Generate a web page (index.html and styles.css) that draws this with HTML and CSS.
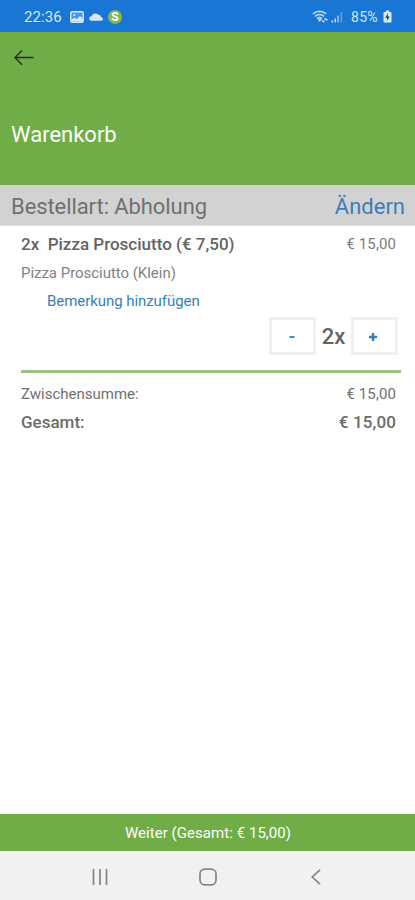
FILE: index.html
```html
<!DOCTYPE html>
<html lang="de">
<head>
<meta charset="utf-8">
<meta name="viewport" content="width=device-width, initial-scale=1">
<title>Warenkorb</title>
<link rel="stylesheet" href="styles.css">
</head>
<body>
<div class="screen">
  <div class="status">
    <span class="clock">22:36</span>
    <svg class="i-photo" width="14" height="12" viewBox="0 0 14 12"><rect x=".8" y=".8" width="12.4" height="10.4" rx="1.5" fill="#4c93e2" stroke="#d5e9fb" stroke-width="1.5"/><circle cx="4.3" cy="4" r="1.1" fill="#d5e9fb"/><path d="M1.500 10.500V8.600l3-2 2.300 1.600L10 5l3 3v2.500z" fill="#d5e9fb"/></svg>
    <svg class="i-cloud" width="14" height="9" viewBox="0 0 14 9"><path d="M2.500 8.800a2.300 2.300 0 0 1 0-4.600A4 4 0 0 1 9.300 2.800a3 3 0 0 1 2.900 2.400A1.800 1.800 0 0 1 12.200 8.800z" fill="#d5e9fb"/></svg>
    <span class="s-badge">S</span>
    <span class="fill"></span>
    <svg class="i-wifi" width="17" height="13" viewBox="0 0 17 13" fill="none" stroke="#b9daf8" stroke-width="1.700"><path d="M.8 4C4.400.600 10.600.600 14.200 4M3 6.300c2.600-2.300 6.400-2.300 9 0M5.200 8.600c1.300-1.200 3.300-1.200 4.600 0"/><path d="M7.800 12 5.300 8.800h4.600z" fill="#b9daf8" stroke="none"/><path d="m10 10.500 2.500 1.500M12.500 8.500l3 1.700"/></svg>
    <svg class="i-signal" width="12" height="12" viewBox="0 0 12 12"><path d="M.5 9.500H2v2H.5zM3.500 7.500H5v4H3.500z" fill="#c5dff8"/><path d="M6.200 4.500H8v7H6.200z" fill="#83b6ec"/><path d="M9.500 1h1.700v10.500H9.500z" fill="#5c9de4"/></svg>
    <span class="battery">85%</span>
    <svg class="i-batt" width="9" height="13" viewBox="0 0 9 13"><path d="M2.700.5h3.600v1.500H7.500q1 0 1 1v8.500q0 1-1 1h-6q-1 0-1-1V3q0-1 1-1h1.200z" fill="#d8ebfb"/><path d="M5 3 2.200 7.700h2L3.800 11l3-4.600H4.700z" fill="#173c66"/></svg>
  </div>
  <header class="header">
    <svg class="back" width="20" height="16" viewBox="0 0 20 16" fill="none" stroke="#202e17" stroke-width="1.300"><path d="M19.500 7.500H1M8 .5.900 7.500 8 14.800"/></svg>
    <h1 class="title">Warenkorb</h1>
  </header>
  <div class="order-type"><span class="type-label">Bestellart: Abholung</span><a class="change">Ändern</a></div>
  <main class="cart">
    <div class="row item"><span class="name">2x&nbsp; Pizza Prosciutto (€ 7,50)</span><span class="price item-price">€ 15,00</span></div>
    <div class="row variant"><span class="variant-text">Pizza Prosciutto (Klein)</span></div>
    <div class="row note"><a class="note-text">Bemerkung hinzufügen</a></div>
    <div class="qty">
      <button class="step"><svg class="minus" width="6" height="2"><path d="M.5 1h5" stroke="#367fbf" stroke-width="1.800"/></svg></button>
      <span class="count">2x</span>
      <button class="step"><svg class="plus" width="8" height="8"><path d="M0 4h8M4 0v8" stroke="#367fbf" stroke-width="2.400"/></svg></button>
    </div>
    <div class="rule"></div>
    <div class="row subtotal"><span class="sub-label">Zwischensumme:</span><span class="price">€ 15,00</span></div>
    <div class="row total"><span class="total-label">Gesamt:</span><span class="total-price">€ 15,00</span></div>
  </main>
  <div class="next"><span class="next-text">Weiter (Gesamt: € 15,00)</span></div>
  <nav class="nav">
    <svg width="16" height="16" viewBox="0 0 16 16" stroke="#858585" stroke-width="1.700"><path d="M1.500 0v16M8 0v16M14.500 0v16"/></svg>
    <svg class="home" width="18" height="18" viewBox="0 0 18 18" fill="none" stroke="#858585" stroke-width="1.700"><rect x="1" y="1.200" width="16" height="15.600" rx="4.500"/></svg>
    <svg class="nav-back" width="10" height="16" viewBox="0 0 10 16" fill="none" stroke="#858585" stroke-width="1.700"><path d="M9 .8 1.300 8 9 15.200"/></svg>
  </nav>
</div>
</body>
</html>
```
FILE: styles.css
```css
* { box-sizing: border-box; }
body { margin: 0; background: #fff; font-family: Roboto, sans-serif; color: #707070; }
span, a, h1 { white-space: nowrap; }
.screen { width: 415px; height: 900px; display: flex; flex-direction: column; overflow: hidden; }
.status { height: 32px; flex: none; background: #1976d5; color: #d5e9fb; display: flex; align-items: center; padding: 1px 23px 0 24px; font-size: 15px; }
.clock { width: 46px; letter-spacing: 0.1px; }
.i-cloud { margin-left: 5px; }
.s-badge { width: 14px; height: 14px; margin-left: 5px; border-radius: 50%; background: #83b94f; color: #fff; font-size: 12px; font-weight: 700; line-height: 14px; text-align: center; }
.fill { flex: 1; }
.i-signal { margin-left: 2px; }
.battery { margin-left: 8px; width: 32px; font-size: 14px; letter-spacing: 0.3px; }
.header { height: 153px; flex: none; background: #70ad47; padding: 18px 11px 0 14px; }
.back { display: block; }
.title { margin: 56px 0 0 -3px; font-size: 22px; font-weight: 400; line-height: 26px; color: #fff; }
.order-type { height: 41px; flex: none; background: #d2d2d2; border-bottom: 1px solid #dedede; display: flex; justify-content: space-between; align-items: center; padding: 2px 10px 0 11px; font-size: 22px; }
.type-label { letter-spacing: -0.08px; }
.change { color: #3c7ebc; }
.cart { flex: 1; padding: 0 14px 0 21px; }
.row { display: flex; justify-content: space-between; align-items: center; padding-right: 5px; }
.item { height: 36px; }
.name { font-size: 17px; font-weight: 500; color: #646464; }
.price { font-size: 15px; letter-spacing: 0.1px; }
.item-price { color: #7c7c7c; margin-bottom: 1px; }
.variant { height: 23px; font-size: 15px; color: #828282; }
.variant-text { letter-spacing: -0.03px; margin-bottom: 1px; }
.note { height: 32px; padding-left: 26px; font-size: 15px; color: #367fb8; }
.note-text { letter-spacing: -0.06px; margin-bottom: 1px; }
.qty { display: flex; justify-content: flex-end; align-items: center; height: 38px; padding-right: 3px; }
.step { width: 47px; height: 38px; border: 3px solid #f0f0f0; background: #fff; padding: 0; display: flex; align-items: center; justify-content: center; }
.minus { margin: 1px 2px 0 0; }
.plus { margin: 1px 4px 0 0; }
.count { width: 35px; text-align: center; font-size: 22px; font-weight: 500; color: #646464; }
.rule { height: 3px; margin-top: 15px; background: #9bc283; }
.subtotal { height: 40px; padding-top: 1px; }
.sub-label { font-size: 15px; }
.total { height: 17px; font-size: 17px; font-weight: 500; color: #6b6b6b; }
.total-price { letter-spacing: 0.12px; }
.next { height: 37px; flex: none; background: #70ad47; color: #fff; display: flex; align-items: center; justify-content: center; font-size: 15px; padding: 1px 0 0 1px; }
.next-text { letter-spacing: 0.05px; }
.nav { height: 49px; flex: none; background: #f1f1f1; display: grid; grid-template-columns: 107px 111px 1fr; align-items: center; padding: 3px 92px 0 92px; }
.nav-back { margin-left: 1px; }
```
